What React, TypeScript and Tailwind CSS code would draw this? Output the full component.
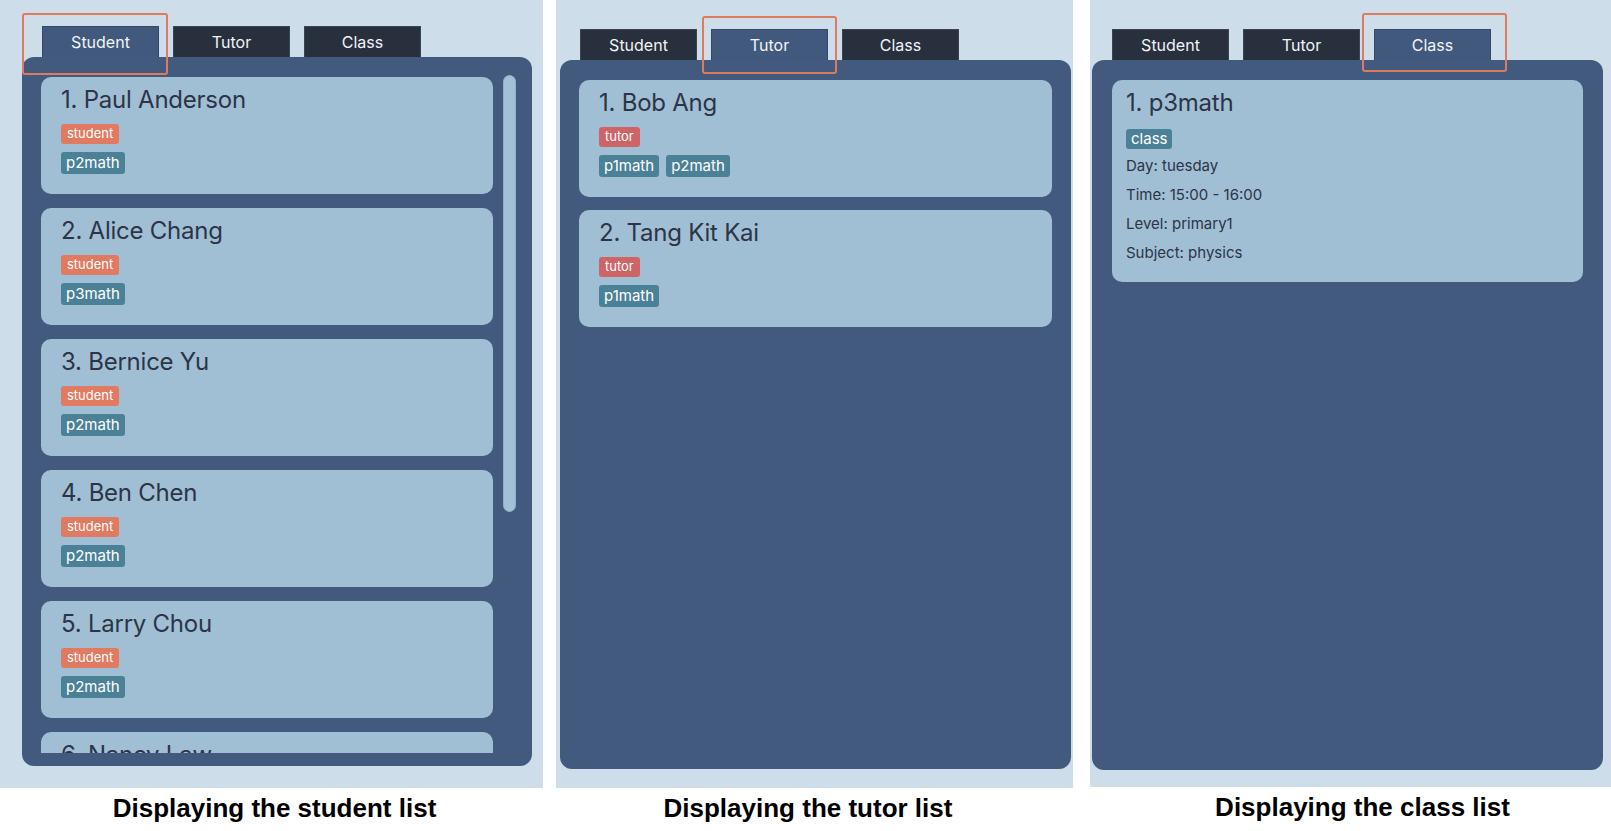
type Person = { name: string; subjects: string[] };

const students: Person[] = [
  { name: "Paul Anderson", subjects: ["p2math"] },
  { name: "Alice Chang", subjects: ["p3math"] },
  { name: "Bernice Yu", subjects: ["p2math"] },
  { name: "Ben Chen", subjects: ["p2math"] },
  { name: "Larry Chou", subjects: ["p2math"] },
  { name: "Nancy Law", subjects: ["p2math"] },
];

const tutors: Person[] = [
  { name: "Bob Ang", subjects: ["p1math", "p2math"] },
  { name: "Tang Kit Kai", subjects: ["p1math"] },
];

function Tabs({ active }: { active: string }) {
  return (
    <div className="flex h-[31px] gap-[14px]">
      {["Student", "Tutor", "Class"].map((name) => (
        <div
          key={name}
          className={
            name === active
              ? "flex w-[117px] items-center justify-center border-x border-t border-[#33496b] bg-[#41597d] text-[16px] text-[#f1f4f8]"
              : "flex w-[117px] items-center justify-center border-x border-t border-[#3a4456] bg-[#282f3d] text-[16px] text-[#f1f4f8]"
          }
        >
          {name}
        </div>
      ))}
    </div>
  );
}

function PersonCard({ index, person, role }: { index: number; person: Person; role: "student" | "tutor" }) {
  return (
    <div className="h-[117px] shrink-0 rounded-[10px] bg-[#a0bfd5] pl-[20px] pt-[8px]">
      <p className="text-[24px] leading-[30px] tracking-[-0.01em] text-[#2c3446]">
        {index}. {person.name}
      </p>
      <div className="mt-[9px] flex">
        <span
          className={
            role === "student"
              ? "flex h-[20px] items-center rounded-[3px] bg-[#e07a61] px-[6px] text-[13px] text-white"
              : "flex h-[20px] items-center rounded-[3px] bg-[#cf6466] px-[6px] text-[13px] text-white"
          }
        >
          {role}
        </span>
      </div>
      <div className="mt-[8px] flex gap-[7px]">
        {person.subjects.map((s) => (
          <span key={s} className="flex h-[22px] items-center rounded-[3px] bg-[#4b8197] px-[5px] text-[15px] text-white">
            {s}
          </span>
        ))}
      </div>
    </div>
  );
}

function Highlight({ className }: { className: string }) {
  return <div className={"pointer-events-none absolute rounded-[3px] border-[2.5px] border-[#e07a5f] " + className} />;
}

function Caption({ text, className }: { text: string; className: string }) {
  return (
    <p
      className={
        "h-[43px] bg-white pt-[7px] text-center font-['Liberation_Sans',Arial,sans-serif] text-[26px] font-bold leading-[26px] text-black " +
        className
      }
    >
      {text}
    </p>
  );
}

export default function App() {
  return (
    <div className="flex h-[831px] w-[1611px] bg-white font-[Inter,sans-serif]">
      {/* student list */}
      <div className="w-[543px]">
        <div className="relative h-[788px] bg-[#cddeea] pl-[22px] pr-[11px] pt-[26px]">
          <div className="pl-[20px]">
            <Tabs active="Student" />
          </div>
          <div className="flex h-[709px] rounded-[12px] bg-[#415a7e] pb-[13px] pl-[19px] pr-[16px] pt-[18px]">
            <div className="flex flex-1 flex-col gap-[14px] overflow-hidden pt-[2px]">
              {students.map((p, i) => (
                <PersonCard key={p.name} index={i + 1} person={p} role="student" />
              ))}
            </div>
            <div className="ml-[10px] h-[437px] w-[13px] rounded-full border border-[#8fb0c9] bg-[#a3c1d6]" />
          </div>
          <Highlight className="left-[22px] top-[13px] h-[62px] w-[146px]" />
        </div>
        <Caption text="Displaying the student list" className="pl-[6px]" />
      </div>

      {/* tutor list */}
      <div className="ml-[13px] w-[517px]">
        <div className="relative h-[788px] bg-[#cddeea] pl-[4px] pr-[2px] pt-[29px]">
          <div className="pl-[20px]">
            <Tabs active="Tutor" />
          </div>
          <div className="flex h-[709px] flex-col gap-[13px] rounded-[12px] bg-[#415a7e] px-[19px] pt-[20px]">
            {tutors.map((p, i) => (
              <PersonCard key={p.name} index={i + 1} person={p} role="tutor" />
            ))}
          </div>
          <Highlight className="left-[146px] top-[16px] h-[58px] w-[135px]" />
        </div>
        <Caption text="Displaying the tutor list" className="pr-[13px]" />
      </div>

      {/* class list */}
      <div className="ml-[17px] w-[521px]">
        <div className="relative h-[787px] bg-[#cddeea] pl-[2px] pr-[8px] pt-[29px]">
          <div className="pl-[20px]">
            <Tabs active="Class" />
          </div>
          <div className="h-[710px] rounded-[12px] bg-[#415a7e] px-[20px] pt-[20px]">
            <div className="rounded-[10px] bg-[#a0bfd5] pb-[15px] pl-[14px] pt-[8px] text-[#2c3446]">
              <p className="text-[24px] leading-[30px] tracking-[-0.01em]">1. p3math</p>
              <div className="mt-[11px] flex">
                <span className="flex h-[20px] items-center rounded-[3px] bg-[#4b8197] px-[5px] text-[15px] text-white">
                  class
                </span>
              </div>
              <div className="mt-[2px] text-[15px] leading-[29px]">
                <p>Day: tuesday</p>
                <p>Time: 15:00 - 16:00</p>
                <p>Level: primary1</p>
                <p>Subject: physics</p>
              </div>
            </div>
          </div>
          <Highlight className="left-[272px] top-[13px] h-[59px] w-[145px]" />
        </div>
        <Caption text="Displaying the class list" className="pl-[24px]" />
      </div>
    </div>
  );
}
